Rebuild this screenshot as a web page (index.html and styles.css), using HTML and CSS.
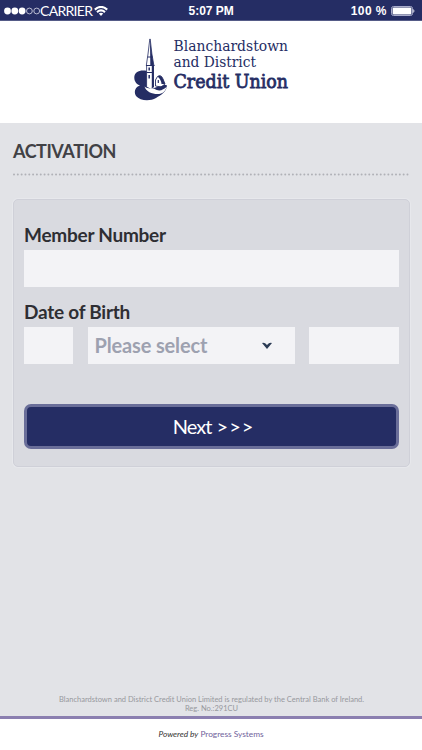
FILE: index.html
```html
<!DOCTYPE html>
<html lang="en">
<head>
<meta charset="utf-8">
<title>Activation</title>
<link rel="stylesheet" href="styles.css">
</head>
<body>
<div class="status">
  <div class="carrier">
    <svg width="36" height="8" viewBox="0 0 36 8"><g fill="#fff"><circle cx="3.5" cy="4" r="3.4"/><circle cx="10.8" cy="4" r="3.4"/><circle cx="18.1" cy="4" r="3.4"/></g><g fill="none" stroke="#c9cbdc" stroke-width=".9"><circle cx="25.4" cy="4" r="2.9"/><circle cx="32.7" cy="4" r="2.9"/></g></svg>
    <span class="carrier-name">CARRIER</span>
    <svg class="wifi" width="14" height="10" viewBox="0 0 14 10"><g fill="none" stroke="#fff" stroke-width="2.1"><path d="M.8 3.6Q7-1.8 13.2 3.6"/><path d="M3 6.1Q7 2.7 11 6.1"/></g><path d="M4.800 7.600Q7 6 9.200 7.600L7 10Z" fill="#fff"/></svg>
  </div>
  <div class="time">5:07 PM</div>
  <div class="battery"><span>100 %</span>
    <svg width="24" height="10" viewBox="0 0 24 10"><rect x=".5" y=".5" width="21" height="9" rx="2" fill="none" stroke="#a9accb"/><rect x="1.6" y="1.4" width="18.8" height="7.2" rx="1" fill="#fff"/><path d="M22.400 3Q24.400 5 22.400 7Z" fill="#fff"/></svg>
  </div>
</div>
<header class="header">
  <svg class="logo" width="170" height="80" viewBox="0 -8 170 80">
    <g fill="#252d64">
      <path d="M13 33C6 31.500 0 34 .3 40C.5 44 3 46.500 6 47.500C1 49 -.5 54 2 58C6 63 16 63.500 22 60C27 57 32.500 54 33 47.500C31 46 29 47 27 48L20 50L13 48Z"/>
    </g>
    <path d="M21.500 48V42L23.500 38.500Q27 36 29 41L31 46L27 49Z" fill="#fff" stroke="#252d64" stroke-width=".9"/>
    <path d="M23.500 38.500Q27 36 29 41L31 46L27.500 46Q27 41 23.500 38.500Z" fill="#252d64"/>
    <path d="M24.300 42V45" stroke="#252d64" stroke-width="1.200"/>
    <path d="M12.600 27.500H19.500V49L16.500 51L12.600 49Z" fill="#fff" stroke="#252d64" stroke-width=".8"/>
    <path d="M17.800 27.500V50L19.900 49V27.500Z" fill="#252d64"/>
    <path d="M15.800 1H16.200L17.900 16L19.900 27.500H12.300L14 16Z" fill="#fff" stroke="#252d64" stroke-width=".8"/>
    <path d="M16 1L17.900 16L19.900 27.500H16.300Z" fill="#252d64"/>
    <path d="M13.500 19H18.500M12 27.500H20.500M12.600 34.500H20" stroke="#252d64" stroke-width="1"/>
    <path d="M15.200 29.500V32.500M15.200 37V40.500" stroke="#252d64" stroke-width="1.500"/>
    <path d="M10.500 48.500C14 52 18 49 22 51.500C26 53.500 29 52 33 48.500C31 53.500 29 55.500 25 56C19 56.500 12 54 10.500 48.500Z" fill="#fff"/>
    <path d="M20 50.500Q25 47.500 31 48L28 50.500Q24 53 20 50.500Z" fill="#252d64"/>
    <g class="logo-text">
      <text x="39.500" y="13" textLength="114.500" lengthAdjust="spacingAndGlyphs">Blanchardstown</text>
      <text x="39.500" y="28.500" textLength="82.500" lengthAdjust="spacingAndGlyphs">and District</text>
      <text class="logo-strong" x="39.500" y="49.500" textLength="114.500" lengthAdjust="spacingAndGlyphs">Credit Union</text>
    </g>
  </svg>
</header>
<main class="main">
  <h1 class="title">ACTIVATION</h1>
  <svg class="dots" width="398" height="3"><line x1="1" y1="1.500" x2="397" y2="1.500" stroke="#b0b1b7" stroke-width="2" stroke-dasharray="0 3.820" stroke-linecap="round"/></svg>
  <form class="card">
    <div class="label member">Member Number</div>
    <div class="field"></div>
    <div class="label birth">Date of Birth</div>
    <div class="date-row">
      <div class="field"></div>
      <div class="field select"><span>Please select</span><svg width="10" height="8" viewBox="0 0 10 8"><path d="M0 1Q2.500 0 5 3Q7.500 0 10 1L5 7Z" fill="#2b3b55"/></svg></div>
      <div class="field"></div>
    </div>
    <button class="next" type="button"><span class="next-word">Next</span><span class="arrows">&gt;&gt;&gt;</span></button>
  </form>
  <p class="legal">Blanchardstown and District Credit Union Limited is regulated by the Central Bank of Ireland.<br>Reg. No.:291CU</p>
</main>
<footer class="footer"><em>Powered by</em> <span>Progress Systems</span></footer>
</body>
</html>
```
FILE: styles.css
```css
* { box-sizing: border-box; }
body {
  margin: 0;
  width: 422px;
  height: 750px;
  display: flex;
  flex-direction: column;
  overflow: hidden;
  background: #e2e3e7;
  font-family: Lato, "Liberation Sans", sans-serif;
}
svg { display: block; flex: none; }
.status {
  height: 21px;
  display: grid;
  grid-template-columns: 1fr 46px 1fr;
  align-items: center;
  padding: 0 7px 0 4px;
  background: #252d64;
  border-bottom: 1px solid #555b87;
  color: #fff;
}
.carrier, .battery { display: flex; align-items: center; }
.carrier-name { font-size: 14px; letter-spacing: -0.7px; line-height: 20px; }
.wifi { margin-left: 2px; }
.time, .battery { font: bold 12px/20px "Liberation Sans", sans-serif; white-space: nowrap; }
.time { padding-left: 2px; }
.battery { justify-content: flex-end; gap: 4px; letter-spacing: .45px; }
.battery span { padding-top: 1px; }
.header { height: 102px; background: #fff; padding: 9px 0 0 134px; }
.logo-text { fill: #252d64; font-family: "DejaVu Serif", serif; font-size: 14.5px; }
.logo-strong { font-size: 19px; stroke: #252d64; stroke-width: .8px; }
.main { flex: 1; display: flex; flex-direction: column; padding: 0 12px 0 13px; }
.title { margin: 16px 0 0; font-size: 18px; line-height: 24px; color: #414145; font-weight: 700; letter-spacing: -0.45px; }
.dots { margin-top: 10px; }
.card {
  margin-top: 23px;
  height: 268px;
  padding: 23px 10px 0;
  background: #d9dae0;
  border: 1px solid #cfd0d8;
  border-radius: 5px;
  box-shadow: 0 0 0 1px #e7e8ec;
  display: flex;
  flex-direction: column;
}
.label { font-size: 19px; line-height: 24px; font-weight: 700; color: #2e2e33; letter-spacing: -0.25px; }
.member { margin-bottom: 3px; }
.birth { margin: 13px 0 3px; }
.field { height: 37px; background: #f3f3f6; }
.date-row { display: grid; grid-template-columns: 49px 207px 90px; justify-content: space-between; }
.select { display: flex; align-items: center; justify-content: space-between; padding: 0 23px 1px 7px; color: #9da1b0; font-size: 20px; font-weight: 700; letter-spacing: -0.15px; }
.select svg { margin-top: 1px; }
.next {
  height: 45px;
  margin-top: 40px;
  border: 3px solid #6a6e99;
  border-radius: 7px;
  background: #252d64;
  color: #fff;
  font: 400 20px/1 Lato, sans-serif;
  display: flex;
  align-items: center;
  justify-content: center;
  gap: 5px;
  padding: 0 0 2px 4px;
}
.next-word { letter-spacing: -0.9px; }
.arrows { letter-spacing: 1px; }
.legal { margin: auto 0 3px; text-align: center; color: #97989d; font-size: 7.53px; line-height: 9px; }
.footer { height: 34px; border-top: 3px solid #8b7fb0; background: #fff; text-align: center; font-size: 8.3px; line-height: 30px; color: #333; }
.footer span { color: #70619b; }
```
